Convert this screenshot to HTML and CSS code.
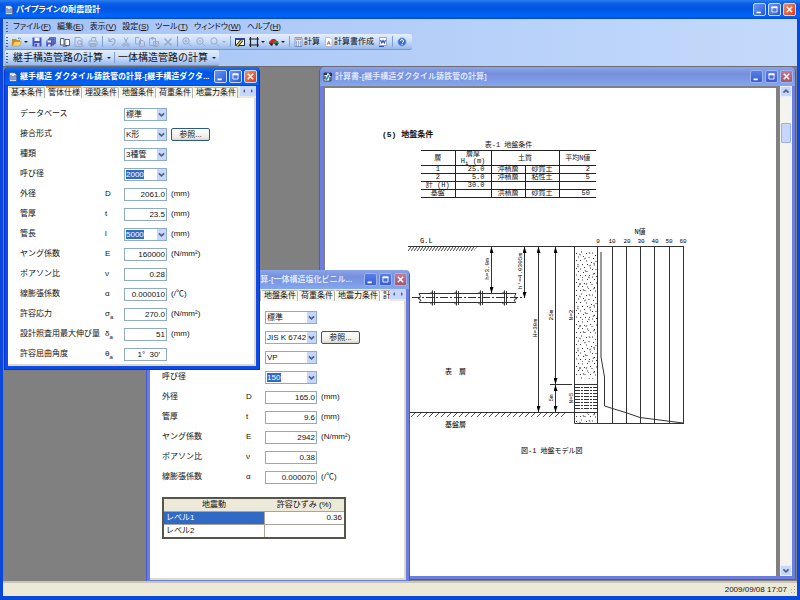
FILE: index.html
```html
<!DOCTYPE html>
<html lang="ja">
<head>
  <meta charset="UTF-8">
  <meta name="viewport" content="width=device-width, initial-scale=1.0">
  <title>パイプラインの耐震設計</title>
  <link rel="stylesheet" href="styles.css">
</head>
<body>
  <!-- 共通アイコン -->
  <svg class="defs" aria-hidden="true">
    <symbol id="i-app" viewBox="0 0 10 10"><path fill="#e8eef8" stroke="#40506a" stroke-width=".6" d="M1.5.8h5l2 2v6.5h-7z"/><path stroke="#315a9a" stroke-width="1" d="M3 3v5M5 4v4M7 3v5"/><path stroke="#7890b0" stroke-width=".7" d="M2 5h6M2 7.5h6"/></symbol>
    <symbol id="i-report" viewBox="0 0 10 10"><path fill="#fff" stroke="#30384c" stroke-width=".8" d="M1 1h7v8H1z"/><path fill="#2a3350" d="M1 1h3v2H1zM6 1h3v3H7z"/><path stroke="#1898b8" stroke-width="1.6" d="M3 8l3-5"/><path stroke="#203060" stroke-width="1.2" d="M7 5v4M2 4v3"/></symbol>
    <symbol id="i-min" viewBox="0 0 13 13"><path fill="#fff" d="M3 9h5v2H3z"/></symbol>
    <symbol id="i-max" viewBox="0 0 13 13"><path fill="none" stroke="#fff" d="M3.5 3.5h6v6h-6z"/><path fill="#fff" d="M3 3h7v2H3z"/></symbol>
    <symbol id="i-close" viewBox="0 0 13 13"><path stroke="#fff" stroke-width="1.7" d="M3.3 3.3l6.4 6.4M9.7 3.3L3.3 9.7"/></symbol>
    <symbol id="i-down" viewBox="0 0 8 8"><path fill="none" stroke="#4d6185" stroke-width="1.5" d="M1.7 3L4 5.2 6.3 3"/></symbol>
  </svg>

  <div class="app">
    <header class="titlebar">
      <svg class="app-icon"><use href="#i-app"/></svg>
      <h1>パイプラインの耐震設計</h1>
      <button class="win-btn" aria-label="最小化"><svg><use href="#i-min"/></svg></button>
      <button class="win-btn" aria-label="最大化"><svg><use href="#i-max"/></svg></button>
      <button class="win-btn close" aria-label="閉じる"><svg><use href="#i-close"/></svg></button>
    </header>

    <div class="bars">
      <nav class="menubar">
        <span class="grip"></span>
        <a href="#">ファイル(<u>F</u>)</a>
        <a href="#">編集(<u>E</u>)</a>
        <a href="#">表示(<u>V</u>)</a>
        <a href="#">設定(<u>S</u>)</a>
        <a href="#">ツール(<u>T</u>)</a>
        <a href="#">ウィンドウ(<u>W</u>)</a>
        <a href="#">ヘルプ(<u>H</u>)</a>
      </nav>

      <div class="toolbar icons">
        <span class="grip"></span>
        <button class="tool drop" aria-label="開く"><svg viewBox="0 0 10 10"><path fill="#c98a1c" d="M0 2h4l1 1h3v6H0z"/><path fill="#ffd76a" stroke="#b87b18" stroke-width=".5" d="M.5 9l2-4.5h7L7.500 9z"/><path fill="none" stroke="#3b64a8" stroke-width=".8" d="M6 1.500q2-1.500 3 .8"/></svg></button>
        <button class="tool" aria-label="保存"><svg viewBox="0 0 10 10"><path fill="#4355c4" d="M.5.5h9v9h-9z"/><path fill="#eef2ff" d="M2.500.5h5v3.500h-5z"/><path fill="#b9c3ee" d="M2.500 6h5v3.500h-5z"/><path fill="#303c90" d="M3.300 6.800h1.500v2.700H3.300z"/></svg></button>
        <button class="tool" aria-label="すべて保存"><svg viewBox="0 0 10 10"><path fill="#7684dc" stroke="#303c90" stroke-width=".6" d="M3.500.5h6v6h-6z"/><path fill="#6372d0" stroke="#303c90" stroke-width=".6" d="M2 2h6v6H2z"/><path fill="#4355c4" d="M.3 3.500h6v6h-6z"/><path fill="#eef2ff" d="M1.500 3.500h3.500v2H1.500zM2 7.500h2.500v2H2z"/></svg></button>
        <button class="tool" aria-label="ページ"><svg viewBox="0 0 10 10"><path fill="#fff" stroke="#34435e" stroke-width=".8" d="M.5 1.500h3.500V8H.5zM5 2.500h4.500v6H5z"/><path stroke="#34435e" stroke-width=".7" d="M3 9.200h4"/></svg></button>
        <button class="tool off" aria-label="印刷プレビュー"><svg viewBox="0 0 10 10"><path d="M1 .5h5l2 2v7H1z"/><circle cx="5.500" cy="5.500" r="2"/><path d="M7 7l2.500 2.500"/></svg></button>
        <button class="tool off" aria-label="印刷"><svg viewBox="0 0 10 10"><path d="M3 4l1-3.500h4L7 4M1 4h8v4H1zM2.500 6.500h5v3h-5z"/></svg></button>
        <span class="sep"></span>
        <button class="tool off" aria-label="元に戻す"><svg viewBox="0 0 10 10"><path stroke-width="1.200" d="M2 1v3.500h3.500M2 4.500Q6-.5 8 3.500 8.500 6 5 8.500"/></svg></button>
        <button class="tool off" aria-label="切り取り"><svg viewBox="0 0 10 10"><path d="M3 .5L6.500 7M7 .5L3.500 7"/><circle cx="3" cy="8" r="1.300"/><circle cx="7" cy="8" r="1.300"/></svg></button>
        <button class="tool off" aria-label="コピー"><svg viewBox="0 0 10 10"><path d="M.5.5H4L5.500 2v5h-5zM4.500 3.500H8L9.500 5v4.500h-5z"/></svg></button>
        <button class="tool off" aria-label="貼り付け"><svg viewBox="0 0 10 10"><path d="M.5 1.500h6v7h-6zM2.500.5h2v1.500h-2zM4.500 4.500h5v5h-5zM6 6.500h2M6 8h2"/></svg></button>
        <button class="tool off" aria-label="削除"><svg viewBox="0 0 10 10"><path stroke-width="1.500" d="M1.500 1.500l7 7M8.500 1.500l-7 7"/></svg></button>
        <span class="sep"></span>
        <button class="tool off" aria-label="拡大"><svg viewBox="0 0 10 10"><circle cx="4" cy="4" r="3.200"/><path d="M2.500 4h3M4 2.500v3M6.500 6.500l3 3"/></svg></button>
        <button class="tool off" aria-label="縮小"><svg viewBox="0 0 10 10"><circle cx="4" cy="4" r="3.200"/><path d="M2.500 4h3M6.500 6.500l3 3"/></svg></button>
        <button class="tool off drop" aria-label="倍率"><svg viewBox="0 0 10 10"><circle cx="4" cy="4" r="3.200"/><path d="M6.500 6.500l3 3"/></svg></button>
        <span class="sep"></span>
        <button class="tool" aria-label="編集画面"><svg viewBox="0 0 10 10"><path fill="#fff" stroke="#18244a" d="M.5 1.500h9v7h-9z"/><path fill="#2742a8" d="M0 1h10v2H0z"/><path stroke="#18180c" stroke-width="3" d="M2 9l5-6"/><path stroke="#e8dc30" stroke-width="1.300" d="M2 9l5-6"/></svg></button>
        <button class="tool drop" aria-label="寸法"><svg viewBox="0 0 10 10"><path fill="none" stroke="#222" stroke-width="1.200" d="M1.500 0v10M8.500 0v10M0 2h10M0 8h10"/></svg></button>
        <button class="tool drop" aria-label="荷重"><svg viewBox="0 0 10 10"><path fill="#c92822" d="M0 5l3-3h3l3 3v2H0z"/><path fill="#278a33" d="M4 4h5l1 3H4z"/><circle cx="2.500" cy="7.500" r="1.300" fill="#222"/><circle cx="7.500" cy="7.500" r="1.300" fill="#222"/></svg></button>
        <span class="sep"></span>
        <button class="tool text"><svg viewBox="0 0 10 10"><path fill="#dce7fa" stroke="#6580b5" stroke-width=".7" d="M1 .5h7v9H1z"/><path fill="#d98080" d="M2 1.500h5v1.500H2z"/><path stroke="#5471b0" stroke-dasharray="1 1" d="M2 5h5M2 7h5M2 9h5"/></svg>計算</button>
        <button class="tool text"><svg viewBox="0 0 10 10"><path fill="#fff" stroke="#9aa8c6" stroke-width=".7" d="M1.500.5h4.500l2 2v7h-6.500z"/><path fill="none" stroke="#bd5555" stroke-width=".8" d="M3 8l1.700-4L6.300 8M3.500 6.500H6"/></svg>計算書作成</button>
        <button class="tool" aria-label="出力"><svg viewBox="0 0 10 10"><path fill="#fff" stroke="#7888b8" stroke-width=".7" d="M1.500.5h7v8h-7z"/><path fill="none" stroke="#2c50b8" stroke-width="1.100" d="M2.500 3l1.200 3L5 3.500 6.300 6l1.200-3M1 9.500h5"/></svg></button>
        <span class="sep"></span>
        <button class="tool" aria-label="ヘルプ"><svg viewBox="0 0 10 10"><circle cx="5" cy="5" r="4.300" fill="#3c70d2" stroke="#a9c5f5" stroke-width=".8"/><path fill="none" stroke="#fff" d="M3.500 4q0-1.500 1.500-1.500T6.500 4 5 6M5 7v1"/></svg></button>
      </div>

      <div class="toolbar large">
        <span class="grip"></span>
        <button class="calc-btn">継手構造管路の計算</button>
        <span class="sep"></span>
        <button class="calc-btn">一体構造管路の計算</button>
      </div>
    </div>

    <main class="workspace">
      <!-- 計算書ウィンドウ -->
      <section class="window inactive report-window">
        <div class="window-title">
          <svg class="app-icon"><use href="#i-report"/></svg>
          <h2>計算書-[継手構造ダクタイル鋳鉄管の計算]</h2>
          <button class="win-btn" aria-label="最小化"><svg><use href="#i-min"/></svg></button>
          <button class="win-btn" aria-label="最大化"><svg><use href="#i-max"/></svg></button>
          <button class="win-btn close" aria-label="閉じる"><svg><use href="#i-close"/></svg></button>
        </div>
        <div class="viewer">
          <article class="page">
            <h3>(5) 地盤条件</h3>
            <table class="soil-table">
              <caption>表-1 地盤条件</caption>
              <colgroup><col class="c-layer"><col class="c-thick"><col class="c-soil"><col class="c-soil"><col class="c-n"></colgroup>
              <thead>
                <tr><th>層</th><th>層厚<br>H<sub>i</sub> (m)</th><th colspan="2">土質</th><th>平均N値</th></tr>
              </thead>
              <tbody>
                <tr><td>1</td><td>25.0</td><td>沖積層</td><td>砂質土</td><td>2</td></tr>
                <tr><td>2</td><td>5.0</td><td>沖積層</td><td>粘性土</td><td>5</td></tr>
                <tr><td>計 (H)</td><td>30.0</td><td></td><td></td><td></td></tr>
                <tr><td>基盤</td><td></td><td>洪積層</td><td>砂質土</td><td>50</td></tr>
              </tbody>
            </table>

            <!-- 地盤モデル図 -->
            <svg class="model" viewBox="400 225 300 235" role="img" aria-label="地盤モデル図">
              <defs>
                <pattern id="sand" x="574" y="251" width="24" height="42" patternUnits="userSpaceOnUse">
                  <path stroke="#222" stroke-width=".9" d="M2 2l1 1M7 1h1M12 3l1-1M18 2h1M21 4l1 1M4 6h1M9 5l1 1M15 6v1M19 8l1-1M2 10l1-1M6 9l1 1M12 10h1M17 11l1 1M22 10v1M4 13v1M8 14l1-1M13 13l1 1M20 14h1M2 17l1 1M6 18h1M10 17l1-1M16 17h1M18 19l1-1M22 18v1M4 21l1-1M9 21l1 1M13 20v1M20 22l1 1M2 24h1M6 24l1 1M11 25l1-1M15 24l1 1M18 26h1M22 25l1 1M4 28l1 1M8 29h1M13 28l1 1M20 29l1-1M2 32l1-1M6 32v1M10 32l1 1M16 31l1 1M18 33v1M22 32h1M4 36l1-1M8 35l1 1M13 36h1M20 36l1 1M2 39l1 1M6 40l1-1M11 39v1M16 40l1-1M21 40h1"/>
                  <path stroke="#333" stroke-width=".7" d="M5 3l2 1M15 1l1 2M10 8l2-1M21 12l-2 1M3 15l2 1M15 15l2-1M11 19l1 2M19 24l1-2M8 27l1-1M14 26l2 1M5 34l2-1M12 34l1-2M19 38l2-1M9 38l1 2M14 38l1-1"/>
                </pattern>
                <pattern id="ground" x="408" y="247" width="3" height="4" patternUnits="userSpaceOnUse"><path stroke="#111" stroke-width=".8" d="M0 4L3 0"/></pattern>
                <pattern id="base" x="410" y="412" width="6" height="5" patternUnits="userSpaceOnUse"><path stroke="#222" stroke-width=".8" d="M1 5l5-5"/></pattern>
                <marker id="arrow" viewBox="0 0 6 4" refX="6" refY="2" markerWidth="6" markerHeight="4" orient="auto-start-reverse"><path d="M0 0l6 2-6 2z"/></marker>
              </defs>
              <g class="lines">
                <path d="M408 246.500H684M410 412.500H598M550 384.500H572"/>
                <path d="M574.500 246V423.500H684M574 384.500H598"/>
                <path d="M597.500 246V423.500M612.500 246V423.500M626.500 246V423.500M640.500 246V423.500M654.500 246V423.500M669.500 246V423.500M683.500 246V423.500"/>
                <path d="M601 252V357L604.500 377V406L627 413 640 417.500 683 423"/>
                <path stroke-dasharray="5 1 2 1" d="M575 387.500h22M575 390.500h22M575 393.500h22M575 396.500h22M575 399.500h22M575 402.500h22M575 405.500h22M575 408.500h22"/>
                <path d="M419 293.500H516M419 302.500H516M419 293.500q3 5-1 5 5 1 1 4M516 293.500q-3 5 1 5-5 1-1 4"/>
                <path stroke-dasharray="8 2 2 2" d="M412 297.500H524"/>
                <path d="M432.500 290.500v15M434.500 291v14M456.500 290.500v15M458.500 291v14M480.500 290.500v15M482.500 291v14M504.500 290.500v15M506.500 291v14M430 293.500l2-2M454 293.500l2-2M478 293.500l2-2M502 293.500l2-2M430 302.500l2 2M454 302.500l2 2M478 302.500l2 2M502 302.500l2 2"/>
              </g>
              <g class="dims">
                <path d="M491.500 247V293"/><path d="M524.500 247V298"/><path d="M538.500 247V412"/><path d="M555.500 247V384"/><path d="M555.500 385V412"/>
              </g>
              <path fill="url(#ground)" d="M408 247h69l-3 4h-66z"/>
              <path fill="url(#base)" d="M410 412h156v5H410z"/>
              <path fill="url(#sand)" d="M575 251h22v128h-22zM575 413h22v10h-22z"/>
              <g class="mono">
                <text x="420" y="243">G.L</text>
                <text x="640" y="234" text-anchor="middle">N値</text>
                <text x="445" y="374">表　層</text>
                <text x="445" y="427">基盤層</text>
                <text x="521" y="453">図-1 地盤モデル図</text>
              </g>
              <g class="mono axis">
                <text x="598" y="243">0</text><text x="612" y="243">10</text><text x="627" y="243">20</text><text x="641" y="243">30</text><text x="655" y="243">40</text><text x="669" y="243">50</text><text x="683" y="243">60</text>
              </g>
              <g class="mono axis">
                <text transform="translate(489 269) rotate(-90)">h=3.0m</text>
                <text transform="translate(522 271) rotate(-90)">h'=4.0305m</text>
                <text transform="translate(537 328) rotate(-90)">H=30m</text>
                <text transform="translate(553 315) rotate(-90)">25m</text>
                <text transform="translate(573 315) rotate(-90)">N=2</text>
                <text transform="translate(553 398) rotate(-90)">5m</text>
                <text transform="translate(573 398) rotate(-90)">N=5</text>
              </g>
            </svg>
          </article>
          <div class="scrollbar">
            <button aria-label="上へ"><svg class="up"><use href="#i-down"/></svg></button>
            <span class="thumb"></span>
            <button aria-label="下へ"><svg><use href="#i-down"/></svg></button>
          </div>
        </div>
      </section>

      <!-- 一体構造ウィンドウ -->
      <section class="window inactive pvc-window">
        <div class="window-title">
          <svg class="app-icon"><use href="#i-app"/></svg>
          <h2>一体構造 塩化ビニル管の計算-[一体構造塩化ビニル...</h2>
          <button class="win-btn" aria-label="最小化"><svg><use href="#i-min"/></svg></button>
          <button class="win-btn" aria-label="最大化"><svg><use href="#i-max"/></svg></button>
          <button class="win-btn close" aria-label="閉じる"><svg><use href="#i-close"/></svg></button>
        </div>
        <div class="tabs">
          <div class="tab-list">
            <button class="tab">基本条件</button><button class="tab active">管体仕様</button><button class="tab">埋設条件</button><button class="tab">地盤条件</button><button class="tab">荷重条件</button><button class="tab">地震力条件</button><button class="tab">計算条件</button>
          </div>
          <button class="tab-scroll" aria-label="前へ"><i class="left"></i></button><button class="tab-scroll" aria-label="次へ"><i class="right"></i></button>
        </div>
        <form class="form">
          <div class="row"><label for="p-db">データベース</label><i></i><span class="combo"><select id="p-db"><option>標準</option></select><svg><use href="#i-down"/></svg></span></div>
          <div class="row"><label for="p-joint">規格</label><i></i><span class="combo"><select id="p-joint"><option>JIS K 6742</option></select><svg><use href="#i-down"/></svg></span><button type="button" class="ref-btn">参照...</button></div>
          <div class="row"><label for="p-kind">種類</label><i></i><span class="combo"><select id="p-kind"><option>VP</option></select><svg><use href="#i-down"/></svg></span></div>
          <div class="row"><label for="p-dia">呼び径</label><i></i><span class="combo"><select id="p-dia" class="selected short"><option>150</option></select><svg><use href="#i-down"/></svg></span></div>
          <div class="row"><label for="p-od">外径</label><i>D</i><input id="p-od" value="165.0"><span>(mm)</span></div>
          <div class="row"><label for="p-t">管厚</label><i>t</i><input id="p-t" value="9.6"><span>(mm)</span></div>
          <div class="row"><label for="p-e">ヤング係数</label><i>E</i><input id="p-e" value="2942"><span>(N/mm²)</span></div>
          <div class="row"><label for="p-nu">ポアソン比</label><i>ν</i><input id="p-nu" value="0.38"></div>
          <div class="row"><label for="p-a">線膨張係数</label><i>α</i><input id="p-a" value="0.000070"><span>(/℃)</span></div>
          <table class="strain">
            <thead><tr><th>地震動</th><th>許容ひずみ (%)</th></tr></thead>
            <tbody>
              <tr><td class="current">レベル1</td><td>0.36</td></tr>
              <tr><td>レベル2</td><td></td></tr>
            </tbody>
          </table>
        </form>
      </section>

      <!-- 継手構造ウィンドウ -->
      <section class="window iron-window">
        <div class="window-title">
          <svg class="app-icon"><use href="#i-app"/></svg>
          <h2>継手構造 ダクタイル鋳鉄管の計算-[継手構造ダクタ...</h2>
          <button class="win-btn" aria-label="最小化"><svg><use href="#i-min"/></svg></button>
          <button class="win-btn" aria-label="最大化"><svg><use href="#i-max"/></svg></button>
          <button class="win-btn close" aria-label="閉じる"><svg><use href="#i-close"/></svg></button>
        </div>
        <div class="tabs">
          <div class="tab-list">
            <button class="tab">基本条件</button><button class="tab active">管体仕様</button><button class="tab">埋設条件</button><button class="tab">地盤条件</button><button class="tab">荷重条件</button><button class="tab">地震力条件</button>
          </div>
          <button class="tab-scroll" aria-label="前へ"><i class="left"></i></button><button class="tab-scroll" aria-label="次へ"><i class="right"></i></button>
        </div>
        <form class="form">
          <div class="row"><label for="d-db">データベース</label><i></i><span class="combo"><select id="d-db"><option>標準</option></select><svg><use href="#i-down"/></svg></span></div>
          <div class="row"><label for="d-joint">接合形式</label><i></i><span class="combo"><select id="d-joint"><option>K形</option></select><svg><use href="#i-down"/></svg></span><button type="button" class="ref-btn">参照...</button></div>
          <div class="row"><label for="d-kind">種類</label><i></i><span class="combo"><select id="d-kind"><option>3種管</option></select><svg><use href="#i-down"/></svg></span></div>
          <div class="row"><label for="d-dia">呼び径</label><i></i><span class="combo"><select id="d-dia" class="selected"><option>2000</option></select><svg><use href="#i-down"/></svg></span></div>
          <div class="row"><label for="d-od">外径</label><i>D</i><input id="d-od" value="2061.0"><span>(mm)</span></div>
          <div class="row"><label for="d-t">管厚</label><i>t</i><input id="d-t" value="23.5"><span>(mm)</span></div>
          <div class="row"><label for="d-l">管長</label><i>l</i><span class="combo"><select id="d-l" class="selected"><option>5000</option></select><svg><use href="#i-down"/></svg></span><span>(mm)</span></div>
          <div class="row"><label for="d-e">ヤング係数</label><i>E</i><input id="d-e" value="160000"><span>(N/mm²)</span></div>
          <div class="row"><label for="d-nu">ポアソン比</label><i>ν</i><input id="d-nu" value="0.28"></div>
          <div class="row"><label for="d-a">線膨張係数</label><i>α</i><input id="d-a" value="0.000010"><span>(/℃)</span></div>
          <div class="row"><label for="d-s">許容応力</label><i>σ<sub>a</sub></i><input id="d-s" value="270.0"><span>(N/mm²)</span></div>
          <div class="row"><label for="d-d">設計照査用最大伸び量</label><i>δ<sub>a</sub></i><input id="d-d" value="51"><span>(mm)</span></div>
          <div class="row"><label for="d-th">許容屈曲角度</label><i>θ<sub>a</sub></i><input id="d-th" class="angle" value="1°  30′"></div>
        </form>
      </section>
    </main>

    <footer class="statusbar">
      <time datetime="2009-09-08T17:07">2009/09/08 17:07</time>
      <svg class="size-grip" viewBox="0 0 7 7"><path fill="#a8a494" d="M5 0h1v1H5zM5 3h1v1H5zM5 6h1v1H5zM2 3h1v1H2zM2 6h1v1H2z"/></svg>
    </footer>
  </div>
</body>
</html>
```
FILE: styles.css
```css
*,
*::after {
  box-sizing: border-box;
}

* {
  margin: 0;
  padding: 0;
}

body,
button,
input,
select {
  font-family: "Liberation Sans", "Noto Sans CJK JP", sans-serif;
  font-size: 8px;
  line-height: 12px;
  color: #111;
}

button {
  border: none;
  background: none;
  white-space: nowrap;
}

svg {
  display: block;
}

.defs {
  position: absolute;
  width: 0;
  height: 0;
}

/* メインウィンドウ */
.app {
  display: flex;
  flex-direction: column;
  height: 100vh;
  padding: 0 3px 4px;
  background: #0a48dc;
  overflow: hidden;
}

.titlebar,
.window-title {
  display: flex;
  align-items: center;
  gap: 2px;
  height: 19px;
  flex: none;
  color: #fff;
}

.titlebar {
  margin: 0 -3px;
  padding: 0 4px;
  background: linear-gradient(#2a7df0, #0a5ce8 20%, #0054e0 45%, #0066fc 85%, #0048c8);
}

h1,
h2 {
  flex: 1;
  font-size: 8px;
  line-height: 12px;
  font-weight: bold;
  white-space: nowrap;
  overflow: hidden;
}

h1 {
  font-feature-settings: "palt";
}

.app-icon {
  flex: none;
  width: 10px;
  height: 10px;
}

.win-btn {
  flex: none;
  width: 13px;
  height: 13px;
  border: 1px solid #c8d8fa;
  border-radius: 2px;
  background: linear-gradient(135deg, #6d95f5, #2858d8);
}

.win-btn svg {
  width: 11px;
  height: 11px;
}

.win-btn.close {
  background: linear-gradient(135deg, #f09070, #d83a14);
}

/* メニューとツールバー */
.bars {
  background: linear-gradient(90deg, #a4c2f6, #c4dafb);
  flex: none;
}

.menubar {
  display: flex;
  align-items: center;
  height: 15px;
  padding-left: 2px;
}

.menubar a {
  margin-right: 6px;
  color: #111;
  text-decoration: none;
  font-feature-settings: "palt";
}

.grip {
  flex: none;
  width: 2px;
  height: 10px;
  margin: 0 5px 0 1px;
  background: repeating-linear-gradient(#3f5f9c 0 1px, transparent 1px 3px);
}

.toolbar {
  display: flex;
  align-items: center;
  width: max-content;
  height: 16px;
  margin-left: 2px;
  padding-right: 3px;
  border-bottom: 1px solid #7596d0;
  border-radius: 2px;
  background: linear-gradient(#e4eefd, #c8dcfa 50%, #98b8ec);
}

.icons .grip {
  margin-right: 2px;
}

.tool {
  display: flex;
  align-items: center;
  padding: 0 2px;
}

.tool svg {
  width: 10px;
  height: 10px;
}

.tool.drop::after,
.calc-btn::after {
  content: "";
  width: 4px;
  margin-left: 2px;
  border: 2px solid transparent;
  border-top-color: #222;
  border-bottom: none;
}

.tool.off svg {
  fill: none;
  stroke: #9aa9c6;
}

.tool.off::after {
  border-top-color: #9aa9c6;
}

.sep {
  width: 1px;
  height: 11px;
  margin: 0 2px;
  background: #7d9ed6;
}

.calc-btn {
  display: flex;
  align-items: center;
  gap: 2px;
  padding: 0;
  font-size: 10px;
}

.large .sep {
  margin: 0 3px;
}

/* ワークスペース */
.workspace {
  position: relative;
  flex: 1;
  min-height: 0;
  background: #808080;
  border-top: 1px solid #6c6c70;
  overflow: hidden;
}

.window {
  position: absolute;
  display: flex;
  flex-direction: column;
  padding: 0 3px 3px;
  border: 1px solid #0831d9;
  border-top: none;
  border-radius: 5px 5px 0 0;
  background: #0f4be6;
  overflow: hidden;
}

.window-title {
  margin: 0 -3px;
  padding: 0 2px 0 3px;
  background: linear-gradient(#1c70f0, #0054e0 30%, #0058ea 60%, #0064fa 90%, #0048c8);
}

.window.inactive {
  border-color: #4a58c8;
  background: #6a7de0;
}

.inactive .window-title {
  color: #dce6fb;
  background: linear-gradient(#8ba4ea, #7690dc 35%, #7c98e4 65%, #83a8f0);
}

.inactive .win-btn {
  border-color: #9db4ee;
  background: linear-gradient(#5580e6, #3c5cd2);
}

.inactive .win-btn.close {
  background: linear-gradient(#c47a90, #a85468);
}

.iron-window {
  left: 1px;
  top: 0;
  width: 256px;
}

.pvc-window {
  left: 143px;
  top: 203px;
  width: 264px;
}

.report-window {
  left: 316px;
  right: 1px;
  top: 0;
  bottom: 1px;
}

/* タブ */
.tabs {
  display: flex;
  height: 12px;
  background: #ece9d8;
}

.tab-list {
  display: flex;
  flex: 1;
  align-items: flex-end;
  overflow: hidden;
}

.tab {
  flex: none;
  height: 11px;
  padding: 0 1px 0 2px;
  border: 1px solid #b4b4a8;
  border-left-color: #fff;
  border-bottom: none;
  border-radius: 2px 2px 0 0;
  background: #f6f5ee;
  line-height: 10px;
}

.tab.active {
  height: 12px;
  border-top: 2px solid #f0a030;
  background: #fff;
}

.tab-scroll {
  display: flex;
  align-items: center;
  justify-content: center;
  width: 8px;
  height: 10px;
  background: #c6d6fc;
}

.tab-scroll i {
  border: 2px solid transparent;
}

.tab-scroll .left {
  border-right-color: #4d6185;
  border-left: none;
}

.tab-scroll .right {
  border-left-color: #4d6185;
  border-right: none;
}

/* 入力フォーム */
.form {
  padding: 6px 0 0 12px;
  border: solid #ddd9c4;
  border-width: 0 2px 2px 0;
  background: #fff;
}

.row {
  display: grid;
  grid-template-columns: 81px 15px 43px 40px;
  column-gap: 4px;
  align-items: center;
  height: 20px;
}

.row label {
  white-space: nowrap;
}

.row > i {
  font-style: normal;
  white-space: nowrap;
}

sub {
  font-size: 6px;
  line-height: 1px;
}

.row input,
.row select {
  width: 100%;
  height: 13px;
  border: 1px solid #8fabc8;
  background: #fff;
  line-height: 11px;
}

.row input {
  padding: 0 1px;
  text-align: right;
}

.row input.angle {
  padding-right: 6px;
  white-space: pre;
}

.combo {
  display: grid;
}

.combo select,
.combo svg {
  grid-area: 1 / 1;
}

.combo select {
  appearance: none;
  padding-left: 1px;
}

.combo select.selected {
  color: #fff;
  background: linear-gradient(#316ac5, #316ac5) 1px 1px / 18px 9px no-repeat #fff;
}

.combo select.short {
  background-size: 14px 9px;
}

.combo svg {
  justify-self: end;
  align-self: center;
  width: 9px;
  height: 11px;
  margin-right: 1px;
  background: #c6d6fc;
  pointer-events: none;
}

.ref-btn {
  height: 13px;
  width: 39px;
  border: 1px solid #2c5a88;
  border-radius: 2px;
  background: linear-gradient(#fff, #ecebe5 80%, #d8d2c4);
  line-height: 11px;
}

.pvc-window .form {
  padding-bottom: 39px;
}

.pvc-window .row {
  grid-template-columns: 80px 15px 52px 40px;
}

.strain {
  width: 184px;
  margin-top: 10px;
  border: 2px solid #55554c;
  border-collapse: collapse;
  table-layout: fixed;
}

.strain th {
  height: 13px;
  background: #ece9d8;
  font-weight: normal;
}

.strain th:first-child {
  width: 101px;
}

.strain td {
  height: 13px;
  padding: 0 2px;
  border: 1px solid #a8a598;
}

.strain td:last-child {
  text-align: right;
}

.strain .current {
  background: #316ac5;
  color: #fff;
}

/* 計算書 */
.viewer {
  display: flex;
  flex: 1;
  min-height: 0;
  padding: 2px 0 0 2px;
  background: #808080;
}

.page {
  flex: 1;
  min-width: 0;
  margin-right: 4px;
  padding: 41px 0 0 57px;
  background: #fff;
  overflow: hidden;
}

.page h3 {
  font-family: "Liberation Mono", "Noto Sans CJK JP", monospace;
  font-size: 8px;
  line-height: 12px;
}

.soil-table {
  width: 175px;
  margin-left: 39px;
  border-collapse: collapse;
  table-layout: fixed;
  font-family: "Liberation Mono", "Noto Sans CJK JP", monospace;
  font-size: 7px;
  line-height: 7px;
  text-align: center;
}

.soil-table caption {
  line-height: 9px;
}

.soil-table th,
.soil-table td {
  height: 8px;
  border: 1px solid #222;
  font-weight: normal;
}

.soil-table th:first-child,
.soil-table td:first-child {
  border-left: none;
}

.soil-table th:last-child,
.soil-table td:last-child {
  border-right: none;
}

.soil-table td:nth-child(2),
.soil-table td:last-child {
  padding-right: 6px;
  text-align: right;
}

.c-layer,
.c-soil {
  width: 34px;
}

.c-thick {
  width: 36px;
}

.model {
  width: 300px;
  height: 235px;
  margin: 27px 0 0 18px;
}

.lines,
.dims {
  fill: none;
  stroke: #333;
  stroke-width: 1;
}

.dims path {
  marker-start: url(#arrow);
  marker-end: url(#arrow);
}

.mono {
  font-family: "Liberation Mono", "Noto Sans CJK JP", monospace;
  font-size: 7px;
}

.axis {
  font-size: 6px;
  text-anchor: middle;
}

.scrollbar {
  display: flex;
  flex-direction: column;
  justify-content: space-between;
  width: 12px;
  margin-top: -2px;
  background: #f4f3ee;
}

.scrollbar button {
  height: 11px;
  border: 1px solid #e8effe;
  background: #c6d6fc;
}

.scrollbar svg {
  width: 10px;
  height: 9px;
}

.scrollbar .up {
  transform: rotate(180deg);
}

.thumb {
  height: 20px;
  margin: 26px 1px auto;
  border: 1px solid #98b0ec;
  border-radius: 1px;
  background: #c6d6fc;
}

/* ステータスバー */
.statusbar {
  display: flex;
  align-items: center;
  justify-content: flex-end;
  gap: 2px;
  height: 15px;
  flex: none;
  padding-right: 1px;
  border-top: 2px solid #c9c6b8;
  background: #ece9d8;
}

.size-grip {
  width: 7px;
  height: 7px;
}
```
